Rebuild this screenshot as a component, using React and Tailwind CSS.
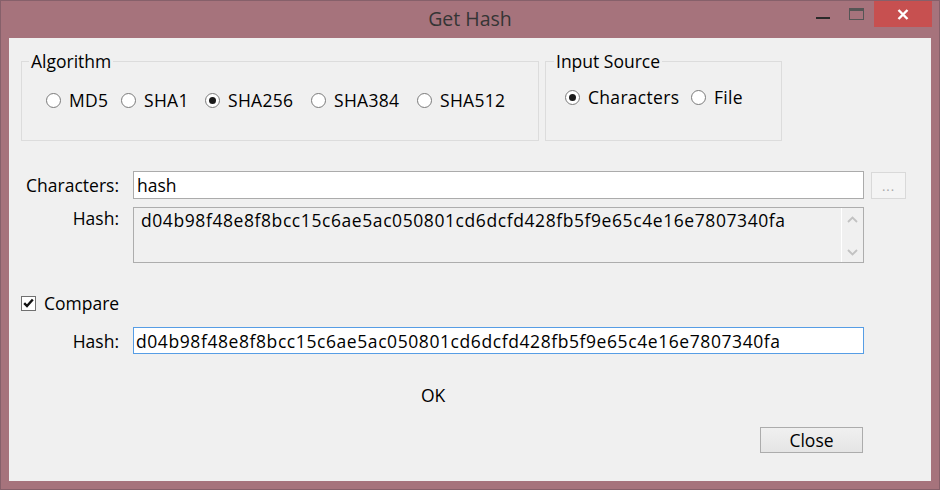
import React from "react";

function Radio({ checked, label, w }) {
  return (
    <div className={"flex items-center gap-[8px] shrink-0 " + w}>
      <span className="w-[15px] h-[15px] shrink-0 rounded-full border border-[#7a7a7a] bg-white flex items-center justify-center">
        {checked && <span className="w-[7px] h-[7px] rounded-full bg-[#1a1a1a]" />}
      </span>
      <span className="tracking-[0.3px] whitespace-nowrap">{label}</span>
    </div>
  );
}

const HASH = "d04b98f48e8f8bcc15c6ae5ac050801cd6dcfd428fb5f9e65c4e16e7807340fa";

export default function App() {
  return (
    <div className="w-[940px] h-[490px] bg-[#a6737c] border border-[#86606a] flex flex-col font-['Open_Sans',sans-serif] text-[17.5px] leading-[22px] text-black overflow-hidden">
      {/* Title bar */}
      <div className="h-[37px] flex shrink-0">
        <div className="w-[123px]" />
        <div className="flex-1 text-center pt-[8px] text-[19.5px] leading-[20px] text-[#353535]">Get Hash</div>
        <div className="w-[123px] flex items-start pr-[7px]">
          <div className="w-[14px] h-[2px] mt-[16px] bg-[#2a2a2a]" />
          <div className="ml-[19px] mt-[7px] w-[15px] h-[12px] border border-[#555] border-t-[3px]" />
          <div className="ml-[10px] w-[58px] h-[26px] bg-[#c75050] flex items-center justify-center">
            <svg width="12" height="11" viewBox="0 0 12 11">
              <path d="M1.5 1 L10.5 10 M10.5 1 L1.5 10" stroke="#ffffff" strokeWidth="2.4" fill="none" />
            </svg>
          </div>
        </div>
      </div>

      {/* Client area */}
      <div className="mx-[8px] h-[443px] bg-[#f0f0f0] flex flex-col">
        {/* Groups */}
        <div className="flex mt-[23px] pl-[12px]">
          <div className="w-[518px] h-[80px] border border-[#dcdcdc] flex flex-col">
            <span className="self-start ml-[7px] -mt-[12px] px-[2px] bg-[#f0f0f0]">Algorithm</span>
            <div className="flex items-center mt-[17px] pl-[24px]">
              <Radio label="MD5" w="w-[75px]" />
              <Radio label="SHA1" w="w-[84px]" />
              <Radio label="SHA256" w="w-[106px]" checked />
              <Radio label="SHA384" w="w-[106px]" />
              <Radio label="SHA512" w="w-[100px]" />
            </div>
          </div>
          <div className="ml-[6px] w-[237px] h-[80px] border border-[#dcdcdc] flex flex-col">
            <span className="self-start ml-[8px] -mt-[12px] px-[2px] bg-[#f0f0f0]">Input Source</span>
            <div className="flex items-center mt-[14px] pl-[19px]">
              <Radio label="Characters" w="w-[126px]" checked />
              <Radio label="File" w="w-[60px]" />
            </div>
          </div>
        </div>

        {/* Characters row */}
        <div className="flex items-center mt-[30px]">
          <div className="w-[110px] text-right">Characters:</div>
          <div className="ml-[14px] w-[731px] h-[28px] border border-[#ababab] bg-white pl-[3px] flex items-center">hash</div>
          <div className="ml-[7px] w-[35px] h-[27px] border border-[#d9d9d9] bg-[#f4f4f4] text-[#a8a8a8] text-[13px] leading-[13px] flex items-end justify-center pb-[5px] tracking-[1px]">...</div>
        </div>

        {/* Hash row */}
        <div className="flex items-start mt-[8px]">
          <div className="w-[110px] text-right">Hash:</div>
          <div className="ml-[14px] w-[731px] h-[56px] border border-[#adadad] bg-[#f0f0f0] flex">
            <div className="flex-1 pt-[1px] pl-[7px] tracking-[0.58px]">{HASH}</div>
            <div className="w-[22px] border-l border-white flex flex-col items-center justify-between pt-[8px] pb-[6px]">
              <svg width="11" height="7" viewBox="0 0 11 7">
                <path d="M1 6 L5.5 1.5 L10 6" stroke="#c2c2c2" strokeWidth="1.8" fill="none" />
              </svg>
              <svg width="11" height="7" viewBox="0 0 11 7">
                <path d="M1 1 L5.5 5.5 L10 1" stroke="#c2c2c2" strokeWidth="1.8" fill="none" />
              </svg>
            </div>
          </div>
        </div>

        {/* Compare */}
        <div className="flex items-center gap-[8px] mt-[29px] pl-[12px]">
          <span className="w-[15px] h-[15px] border border-[#707070] bg-white flex items-center justify-center">
            <svg width="11" height="10" viewBox="0 0 11 10">
              <path d="M1.2 5.2 L4 8 L9.8 1.5" stroke="#111" strokeWidth="2.4" fill="none" />
            </svg>
          </span>
          <span>Compare</span>
        </div>

        {/* Hash 2 */}
        <div className="flex items-center mt-[13px]">
          <div className="w-[110px] text-right">Hash:</div>
          <div className="ml-[14px] w-[731px] h-[27px] border border-[#569de5] bg-white pl-[2px] flex items-center tracking-[0.58px]">{HASH}</div>
        </div>

        {/* OK */}
        <div className="mt-[30px] pl-[412px]">
          <span>OK</span>
        </div>

        {/* Close */}
        <div className="mt-[21px] flex justify-end pr-[68px]">
          <div className="w-[103px] h-[26px] border border-[#acacac] bg-gradient-to-b from-[#f0f0f0] to-[#e5e5e5] flex items-center justify-center">Close</div>
        </div>
      </div>
    </div>
  );
}
